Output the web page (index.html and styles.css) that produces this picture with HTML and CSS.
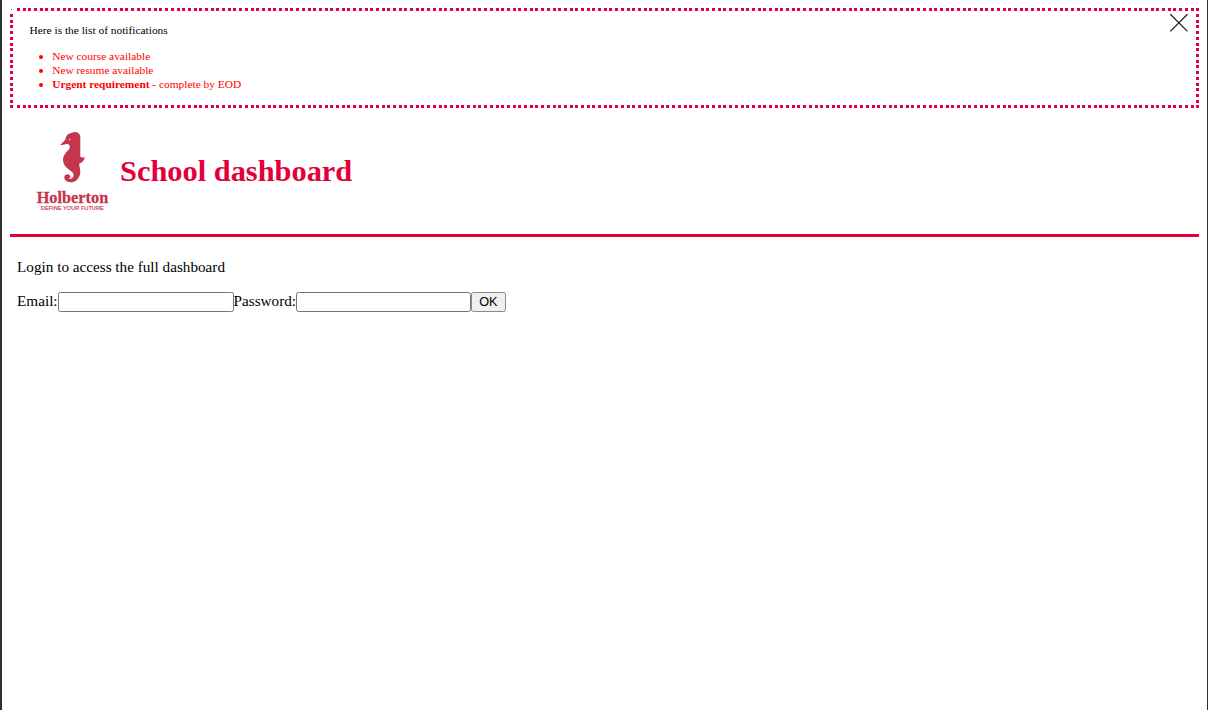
FILE: index.html
```html
<!DOCTYPE html>
<html lang="en">
<head>
<meta charset="utf-8">
<title>School dashboard</title>
<link rel="stylesheet" href="styles.css">
</head>
<body>
<section class="notifications">
  <p class="notice-title">Here is the list of notifications</p>
  <ul class="notice-list">
    <li>New course available</li>
    <li>New resume available</li>
    <li><strong>Urgent requirement</strong> - complete by EOD</li>
  </ul>
  <button class="close" aria-label="Close"><svg width="20" height="20" viewBox="0 0 20 20"><path d="M1.300 1.200L18.500 18.400M18.500 1.200L1.300 18.400" stroke="#222" stroke-width="1.300"/></svg></button>
</section>
<header class="header">
  <svg class="logo" width="90" height="95" viewBox="0 0 90 95">
    <path fill="#c5354c" d="M30.200 20L35.500 14.500C36 10 38.500 8.200 42 7.700C44.500 6.300 47.500 7 49 8.800C50 9.800 50.300 11 50.300 12.500V31.800C51.500 32.700 53 32.700 54.900 32.400C54 35.800 52.200 37.400 49.300 38.500C48.800 41.500 50.600 43.500 50.300 47C50 53.500 45.500 57.600 40.500 57.300C36.500 57 34.100 54.700 34.300 52C34.600 49.300 38.200 48.300 39.800 50.200C41 51.700 40 53.200 38.700 53.500C41.500 54.800 43.900 52.500 43.500 49.500C43 45.500 36.500 44.500 34.200 39.500C31.500 33.500 34 29.500 37.500 26C40 23.500 40.800 20.800 38.300 19.200C36 18.200 33 20.300 30.200 20Z"/>
    <circle cx="39.700" cy="14.500" r=".7" fill="#fff"/>
    <text class="logo-name" transform="translate(6.700 77.500) scale(1 .9)" textLength="71.500" lengthAdjust="spacingAndGlyphs">Holberton</text>
    <text class="logo-tag" x="10.800" y="84.700" textLength="63" lengthAdjust="spacingAndGlyphs">DEFINE YOUR FUTURE</text>
  </svg>
  <h1 class="title">School dashboard</h1>
</header>
<main class="login">
  <p class="intro">Login to access the full dashboard</p>
  <form class="form">
    <label for="email">Email:</label><input class="field" id="email" type="email">
    <label for="password">Password:</label><input class="field field-password" id="password" type="password">
    <button class="submit" type="button">OK</button>
  </form>
</main>
</body>
</html>
```
FILE: styles.css
```css
* { box-sizing: border-box; }
body {
  margin: 0;
  height: 710px;
  padding: 8px 8px 0 7.500px;
  border-left: 2px solid #303032;
  border-right: 1px solid #303032;
  background: #fff;
  font-family: "Liberation Serif", serif;
  font-size: 15.200px;
  overflow: hidden;
}
.notifications {
  --dot: #e1003c;
  position: relative;
  height: 100px;
  padding: 15px 20px 0;
  font-size: 11.400px;
  background:
    repeating-linear-gradient(90deg, var(--dot) 0 3px, transparent 3px 5.697px) 7px 0 / 100% 3px no-repeat,
    repeating-linear-gradient(90deg, var(--dot) 0 3px, transparent 3px 5.697px) 7px 97px / 100% 3px no-repeat,
    repeating-linear-gradient(180deg, var(--dot) 0 3px, transparent 3px 5.710px) 0 6px / 3px 90px no-repeat,
    repeating-linear-gradient(180deg, var(--dot) 0 3px, transparent 3px 5.710px) 100% 6px / 3px 90px no-repeat,
    linear-gradient(var(--dot), var(--dot)) 1px 1px / 1px 1px no-repeat,
    linear-gradient(var(--dot), var(--dot)) 0 97px / 3px 3px no-repeat;
}
.notice-title { margin: 0; line-height: 14px; }
.notice-list {
  margin: 12px 0 0;
  padding-left: 22.700px;
  line-height: 14px;
  color: #f00;
  list-style: none;
}
.notice-list li::before {
  content: "";
  float: left;
  width: 4px;
  height: 4px;
  margin: 6px 0 0 -13.500px;
  border-radius: 50%;
  background: #f00;
}
.close {
  position: absolute;
  top: 5px;
  right: 10.500px;
  width: 20px;
  height: 20px;
  padding: 0;
  border: 0;
  background: none;
}
.close svg { display: block; }
.header {
  display: flex;
  align-items: center;
  height: 129px;
  padding-left: 20.500px;
  border-bottom: 3px solid #e1003c;
}
.logo { flex: none; margin-top: 2px; }
.logo-name {
  font: bold 18px "Liberation Serif", serif;
  fill: #c5354c;
  stroke: #c5354c;
  stroke-width: .3px;
}
.logo-tag {
  font: 5.500px "Liberation Sans", sans-serif;
  fill: #c5354c;
  stroke: #c5354c;
  stroke-width: .15px;
}
.title {
  margin: 0;
  font-size: 30.400px;
  line-height: 36px;
  color: #e1003c;
}
.login { padding: 21px 7.600px; }
.intro { margin: 0; line-height: 18px; }
.form {
  display: flex;
  align-items: flex-start;
  height: 20px;
  margin-top: 15px;
  line-height: 19px;
}
.field {
  width: 176px;
  height: 20px;
  margin-top: 1px;
  padding: 1px 2px;
  border: 1px solid #767676;
  border-radius: 2.500px;
  background: #fff;
}
.field-password { width: 175px; }
.submit {
  width: 34.500px;
  height: 20px;
  margin-top: .6px;
  padding: 0;
  border: 1px solid #8a8a8a;
  border-radius: 2.500px;
  background: #efefef;
  color: #000;
  font: 12.700px "Liberation Sans", sans-serif;
}
```
